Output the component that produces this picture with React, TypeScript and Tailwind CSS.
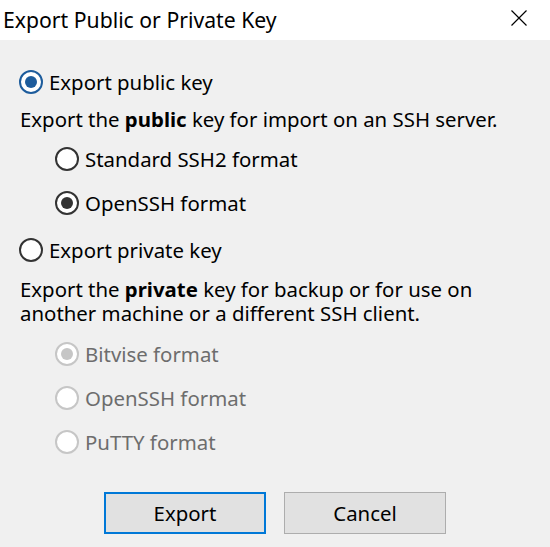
import React from "react";

type RadioProps = { checked?: boolean; disabled?: boolean; accent?: boolean };

function Radio({ checked, disabled, accent }: RadioProps) {
  const ring = disabled ? "border-[#c6c6c6]" : accent ? "border-[#1d5c9c]" : "border-[#333333]";
  const dot = disabled ? "bg-[#c6c6c6]" : accent ? "bg-[#1d5c9c]" : "bg-[#333333]";
  return (
    <span className={`flex h-[24px] w-[24px] shrink-0 items-center justify-center rounded-full border-2 bg-white ${ring}`}>
      {checked && <span className={`h-[12px] w-[12px] rounded-full ${dot}`} />}
    </span>
  );
}

function RadioRow({
  label,
  checked,
  disabled,
  accent,
  indent,
  mt,
}: RadioProps & { label: string; indent?: boolean; mt: string }) {
  return (
    <div className={`flex h-[24px] items-center gap-[6px] ${indent ? "pl-[55px]" : "pl-[19px]"} ${mt}`}>
      <Radio checked={checked} disabled={disabled} accent={accent} />
      <span className={`leading-[24px] ${disabled ? "text-[#6d6d6d]" : "text-black"}`}>{label}</span>
    </div>
  );
}

export default function App() {
  return (
    <div
      className="flex h-[547px] w-[550px] flex-col overflow-hidden bg-[#f0f0f0] text-[20.4px] text-black"
      style={{ fontFamily: '"Noto Sans", "Open Sans", sans-serif' }}
    >
      <div className="flex h-[40px] shrink-0 items-center justify-between bg-white">
        <span className="pl-[3px] text-[21.2px] leading-[36px]">Export Public or Private Key</span>
        <svg width="46" height="36" viewBox="0 0 46 36" className="mr-[8px]">
          <path d="M15.5 8.5 L30.5 23.5 M30.5 8.5 L15.5 23.5" stroke="#000" strokeWidth="1.2" fill="none" />
        </svg>
      </div>

      <RadioRow label="Export public key" checked accent mt="mt-[30px]" />
      <p className="mt-[13px] pl-[20px] leading-[24px]">
        Export the <b>public</b> key for import on an SSH server.
      </p>
      <RadioRow label="Standard SSH2 format" indent mt="mt-[16px]" />
      <RadioRow label="OpenSSH format" indent checked mt="mt-[20px]" />
      <RadioRow label="Export private key" mt="mt-[23px]" />
      <div className="mt-[15px] flex flex-col pl-[20px] pr-[10px]">
        <span className="h-[24px] leading-[24px]">
          Export the <b>private</b> key for backup or for use on
        </span>
        <span className="h-[24px] leading-[24px]">another machine or a different SSH client.</span>
      </div>
      <RadioRow label="Bitvise format" indent checked disabled mt="mt-[17px]" />
      <RadioRow label="OpenSSH format" indent disabled mt="mt-[20px]" />
      <RadioRow label="PuTTY format" indent disabled mt="mt-[20px]" />

      <div className="mt-[38px] flex gap-[18px] pl-[104px]">
        <button className="h-[42px] w-[162px] border-2 border-[#0078d7] bg-[#e1e1e1] text-[20.4px] leading-[24px]">
          Export
        </button>
        <button className="h-[42px] w-[162px] border border-[#adadad] bg-[#e1e1e1] text-[20.4px] leading-[24px]">
          Cancel
        </button>
      </div>
    </div>
  );
}
